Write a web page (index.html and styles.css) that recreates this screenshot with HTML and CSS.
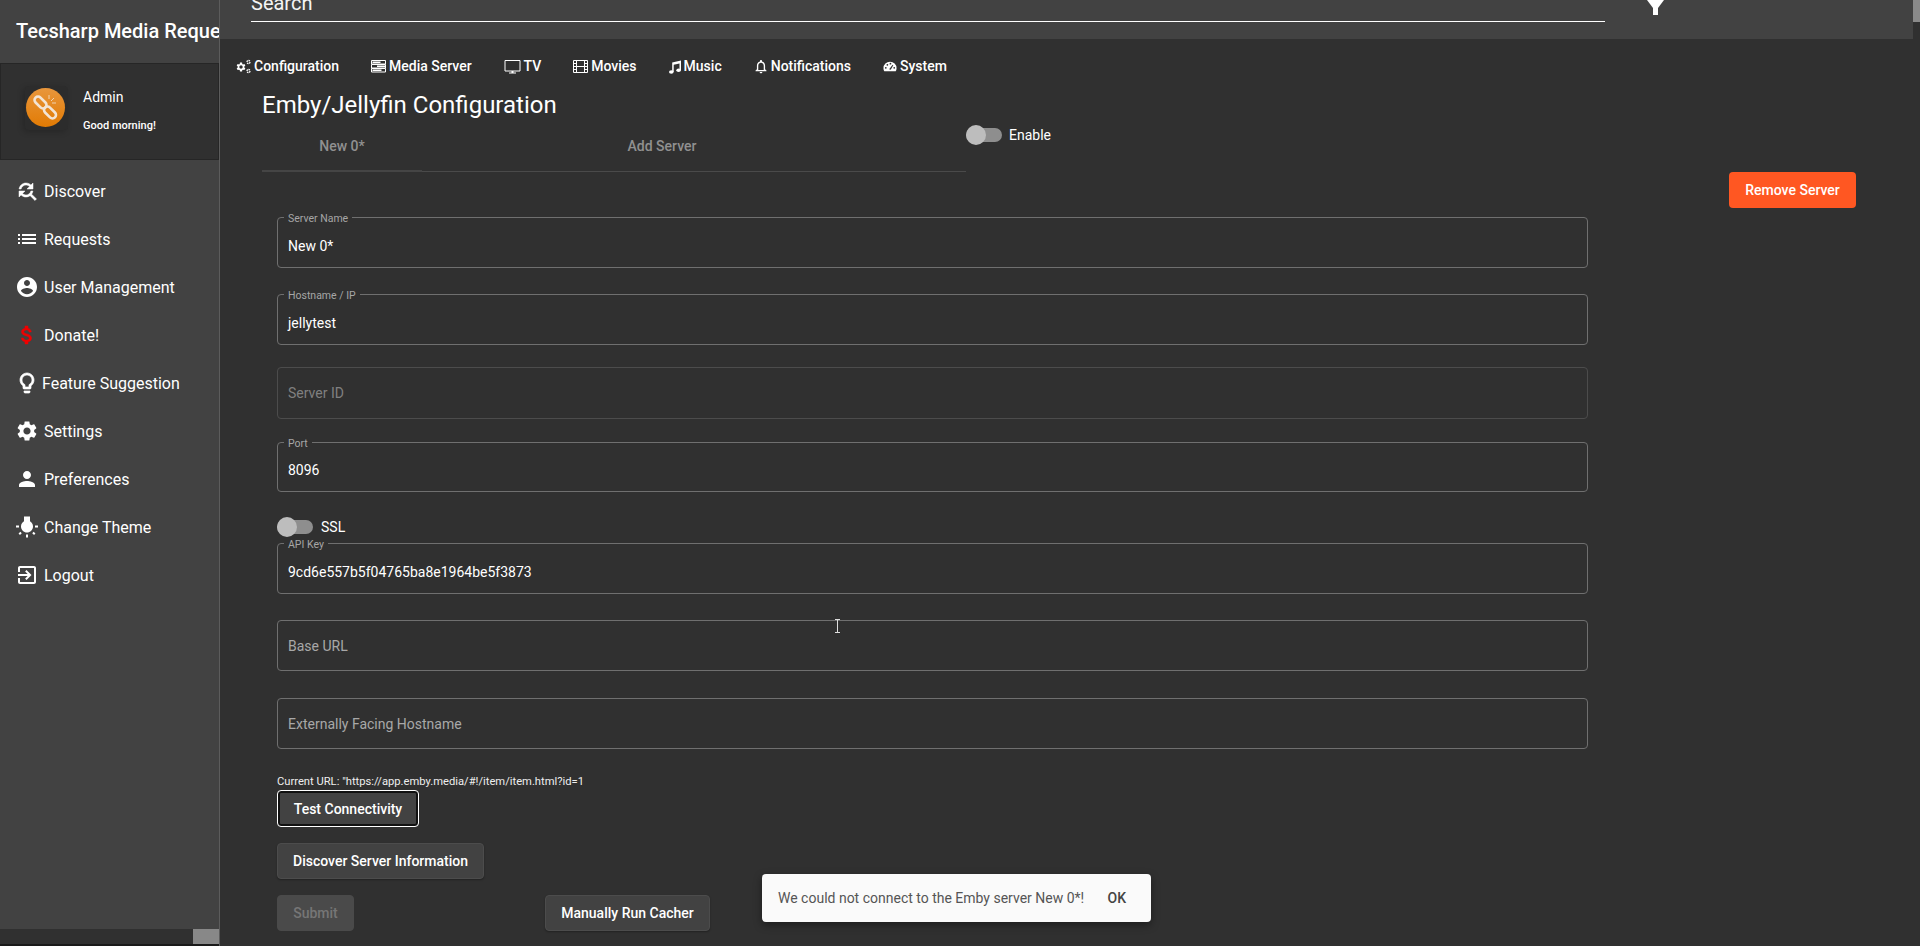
FILE: index.html
```html
<!DOCTYPE html>
<html lang="en">
<head>
  <title>Emby/Jellyfin Configuration</title>
  <link rel="stylesheet" href="styles.css">
</head>
<body>
  <div class="app">
    <div class="sidebar">
      <div class="brand">Tecsharp Media Requests</div>
      <div class="user-panel">
        <div class="avatar-box">
          <div class="avatar">
            <svg viewBox="0 0 39 39" width="39" height="39">
              <g fill="none" stroke="#f3e4d4" stroke-width="2.600">
                <rect x="11" y="7.500" width="7" height="14" rx="3.500" transform="rotate(-45 14.500 14.500)"/>
                <rect x="20.500" y="17.500" width="7" height="14" rx="3.500" transform="rotate(-45 24 24.500)"/>
              </g>
              <path d="M23 7v4M28 10l-3 3M30 15l-4 0" stroke="#f3e4d4" stroke-width=".8" fill="none"/>
            </svg>
          </div>
        </div>
        <div class="user-text">
          <div class="user-name">Admin</div>
          <div class="user-greeting">Good morning!</div>
        </div>
      </div>
      <div class="side-nav">
        <a class="side-item">
          <svg class="side-icon icon-heavy" viewBox="0 0 24 24"><path d="M11 6c1.38 0 2.63.56 3.54 1.46L12 10h6V4l-2.05 2.05C14.68 4.78 12.93 4 11 4c-3.53 0-6.43 2.61-6.92 6H6.1c.46-2.28 2.48-4 4.9-4zm5.64 9.14c.66-.9 1.12-1.97 1.28-3.14H15.9c-.46 2.28-2.48 4-4.9 4-1.38 0-2.63-.56-3.54-1.46L10 12H4v6l2.05-2.05C7.32 17.22 9.07 18 11 18c1.55 0 2.98-.51 4.14-1.36L20 21.49 21.49 20l-4.85-4.86z"/></svg>
          Discover
        </a>
        <a class="side-item">
          <svg class="side-icon" viewBox="0 0 24 24"><path d="M3 13h2v-2H3v2zm0 4h2v-2H3v2zm0-8h2V7H3v2zm4 4h14v-2H7v2zm0 4h14v-2H7v2zM7 7v2h14V7H7z"/></svg>
          Requests
        </a>
        <a class="side-item">
          <svg class="side-icon" viewBox="0 0 24 24"><path d="M12 2C6.48 2 2 6.48 2 12s4.48 10 10 10 10-4.48 10-10S17.52 2 12 2zm0 3c1.66 0 3 1.34 3 3s-1.34 3-3 3-3-1.34-3-3 1.34-3 3-3zm0 14.2c-2.5 0-4.71-1.28-6-3.22.03-1.99 4-3.08 6-3.08 1.99 0 5.97 1.09 6 3.08-1.29 1.94-3.5 3.22-6 3.22z"/></svg>
          User Management
        </a>
        <a class="side-item">
          <svg class="side-icon icon-red" viewBox="0 0 24 24"><path d="M11.8 10.9c-2.27-.59-3-1.2-3-2.15 0-1.09 1.01-1.85 2.7-1.85 1.78 0 2.44.85 2.5 2.1h2.21c-.07-1.72-1.12-3.3-3.21-3.81V3h-3v2.16c-1.94.42-3.5 1.68-3.5 3.61 0 2.31 1.91 3.46 4.7 4.13 2.5.6 3 1.48 3 2.41 0 .69-.49 1.79-2.7 1.79-2.06 0-2.87-.92-2.98-2.1h-2.2c.12 2.19 1.76 3.42 3.68 3.83V21h3v-2.15c1.95-.37 3.5-1.5 3.5-3.55 0-2.84-2.43-3.81-4.7-4.4z"/></svg>
          Donate!
        </a>
        <a class="side-item item-tight">
          <svg class="side-icon icon-bulb" viewBox="0 0 24 24"><path d="M9 21c0 .55.45 1 1 1h4c.55 0 1-.45 1-1v-1H9v1zm3-19C8.14 2 5 5.14 5 9c0 2.38 1.19 4.47 3 5.74V17c0 .55.45 1 1 1h6c.55 0 1-.45 1-1v-2.26c1.81-1.27 3-3.36 3-5.74 0-3.86-3.14-7-7-7zm2.85 11.1l-.85.6V16h-4v-2.3l-.85-.6C7.8 12.16 7 10.63 7 9c0-2.76 2.24-5 5-5s5 2.24 5 5c0 1.63-.8 3.16-2.15 4.1z"/></svg>
          Feature Suggestion
        </a>
        <a class="side-item">
          <svg class="side-icon" viewBox="0 0 24 24"><path d="M19.14 12.94c.04-.3.06-.61.06-.94 0-.32-.02-.64-.07-.94l2.03-1.58c.18-.14.23-.41.12-.61l-1.92-3.32c-.12-.22-.37-.29-.59-.22l-2.39.96c-.5-.38-1.03-.7-1.62-.94l-.36-2.54c-.04-.24-.24-.41-.48-.41h-3.84c-.24 0-.43.17-.47.41l-.36 2.54c-.59.24-1.13.57-1.62.94l-2.39-.96c-.22-.08-.47 0-.59.22L2.74 8.87c-.12.21-.08.47.12.61l2.03 1.58c-.05.3-.09.63-.09.94s.02.64.07.94l-2.03 1.58c-.18.14-.23.41-.12.61l1.92 3.32c.12.22.37.29.59.22l2.39-.96c.5.38 1.03.7 1.62.94l.36 2.54c.05.24.24.41.48.41h3.84c.24 0 .44-.17.47-.41l.36-2.54c.59-.24 1.13-.56 1.62-.94l2.39.96c.22.08.47 0 .59-.22l1.92-3.32c.12-.22.07-.47-.12-.61l-2.01-1.58zM12 15.6c-1.98 0-3.6-1.62-3.6-3.6s1.62-3.6 3.6-3.6 3.6 1.62 3.6 3.6-1.62 3.6-3.6 3.6z"/></svg>
          Settings
        </a>
        <a class="side-item">
          <svg class="side-icon" viewBox="0 0 24 24"><path d="M12 12c2.21 0 4-1.79 4-4s-1.79-4-4-4-4 1.79-4 4 1.79 4 4 4zm0 2c-2.67 0-8 1.34-8 4v2h16v-2c0-2.66-5.33-4-8-4z"/></svg>
          Preferences
        </a>
        <a class="side-item">
          <svg class="side-icon" viewBox="0 0 24 24"><path d="M3.55 18.54l1.41 1.41 1.79-1.8-1.41-1.41-1.79 1.8zM11 22.45h2V19.5h-2v2.95zM4 10.5H1v2h3v-2zm11-4.19V1.5H9v4.81C7.21 7.35 6 9.28 6 11.5c0 3.31 2.69 6 6 6s6-2.69 6-6c0-2.22-1.21-4.15-3-5.19zm5 4.19v2h3v-2h-3zm-2.76 7.66l1.79 1.8 1.41-1.41-1.8-1.79-1.4 1.4z"/></svg>
          Change Theme
        </a>
        <a class="side-item">
          <svg class="side-icon" viewBox="0 0 24 24"><path d="M10.09 15.59L11.5 17l5-5-5-5-1.41 1.41L12.67 11H3v2h9.67l-2.58 2.59zM19 3H5c-1.11 0-2 .9-2 2v4h2V5h14v14H5v-4H3v4c0 1.1.89 2 2 2h14c1.1 0 2-.9 2-2V5c0-1.1-.9-2-2-2z"/></svg>
          Logout
        </a>
      </div>
      <div class="side-scroll">
        <div class="side-scroll-thumb"></div>
        <div class="side-scroll-rest"></div>
      </div>
    </div>

    <div class="main">
      <div class="topbar">
        <div class="search">Search</div>
        <svg class="filter-icon" viewBox="0 0 17 15" width="17" height="15"><path d="M0 0h17l-6 8v7H6V8z"/></svg>
      </div>

      <div class="top-tabs">
        <a class="top-tab">
          <svg class="tab-icon" viewBox="0 0 15 15">
            <path transform="translate(-.5 2.500) scale(.46)" fill="#fff" d="M19.14 12.94c.04-.3.06-.61.06-.94 0-.32-.02-.64-.07-.94l2.03-1.58c.18-.14.23-.41.12-.61l-1.92-3.32c-.12-.22-.37-.29-.59-.22l-2.39.96c-.5-.38-1.03-.7-1.62-.94l-.36-2.54c-.04-.24-.24-.41-.48-.41h-3.84c-.24 0-.43.17-.47.41l-.36 2.54c-.59.24-1.13.57-1.62.94l-2.39-.96c-.22-.08-.47 0-.59.22L2.74 8.87c-.12.21-.08.47.12.61l2.03 1.58c-.05.3-.09.63-.09.94s.02.64.07.94l-2.03 1.58c-.18.14-.23.41-.12.61l1.92 3.32c.12.22.37.29.59.22l2.39-.96c.5.38 1.03.7 1.62.94l.36 2.54c.05.24.24.41.48.41h3.84c.24 0 .44-.17.47-.41l.36-2.54c.59-.24 1.13-.56 1.62-.94l2.39.96c.22.08.47 0 .59-.22l1.92-3.32c.12-.22.07-.47-.12-.61l-2.01-1.58zM12 15.6c-1.98 0-3.6-1.62-3.6-3.6s1.62-3.6 3.6-3.6 3.6 1.62 3.6 3.6-1.62 3.6-3.6 3.6z"/>
            <circle cx="12.500" cy="3" r="1.500" fill="none" stroke="#fff" stroke-width="1.300" stroke-dasharray="1.500 .6"/>
            <circle cx="12.500" cy="12" r="1.500" fill="none" stroke="#fff" stroke-width="1.300" stroke-dasharray="1.500 .6"/>
          </svg>
          Configuration
        </a>
        <a class="top-tab">
          <svg class="tab-icon" viewBox="0 0 15 15"><path d="M.5 1.500h14v3.500H.5zM.5 5.500h14v3.500H.5zM.5 9.500h14v3.500H.5z" fill="none" stroke="#fff"/><path d="M1.500 2.500h8v1.500h-8zM6 6.500h8V8H6zM1.500 10.500h9V12h-9z" fill="#fff"/></svg>
          Media Server
        </a>
        <a class="top-tab">
          <svg class="tab-icon icon-wide" viewBox="0 0 17 15"><path d="M1 1.500h15V12H1z" fill="none" stroke="#fff"/><path d="M5 13.500h7v1H5zM7.500 12h2v1.500h-2z" fill="#fff"/></svg>
          TV
        </a>
        <a class="top-tab">
          <svg class="tab-icon" viewBox="0 0 15 15"><path d="M.5 1.500h14v12H.5zM3.500 1.500v12M11.500 1.500v12M.5 4.500h3M.5 7.500h14M.5 10.500h3M11.500 4.500h3M11.500 10.500h3" fill="none" stroke="#fff"/></svg>
          Movies
        </a>
        <a class="top-tab">
          <svg class="tab-icon icon-narrow" viewBox="0 0 12 15"><path d="M3.200 3.500L12 1.500V11h-1.500V4.500L4.700 5.800V13H3.200z" fill="#fff"/><ellipse cx="2.300" cy="13" rx="2.300" ry="1.700" fill="#fff"/><ellipse cx="9.600" cy="11.200" rx="2.300" ry="1.700" fill="#fff"/></svg>
          Music
        </a>
        <a class="top-tab">
          <svg class="tab-icon icon-bell" viewBox="2 1 20 22"><path fill="#fff" d="M12 22c1.1 0 2-.9 2-2h-4c0 1.1.89 2 2 2zm6-6v-5c0-3.070-1.640-5.640-4.500-6.320V4c0-.83-.67-1.500-1.500-1.500s-1.500.67-1.500 1.500v.68C7.630 5.360 6 7.920 6 11v5l-2 2v1h16v-1l-2-2zm-2 1H8v-6c0-2.480 1.510-4.500 4-4.500s4 2.020 4 4.500v6z"/></svg>
          Notifications
        </a>
        <a class="top-tab">
          <svg class="tab-icon icon-bell" viewBox="0 0 16 16"><path d="M8 2.500a7.500 7.500 0 0 0-7.500 7.500c0 1.400.4 2.600 1 3.500h13c.6-.9 1-2.100 1-3.500A7.500 7.500 0 0 0 8 2.500z" fill="#fff"/><g fill="#303030"><circle cx="3.200" cy="9.500" r="1"/><circle cx="5" cy="6" r="1"/><circle cx="8.500" cy="4.800" r="1"/><circle cx="12.800" cy="9.500" r="1"/><path d="M7 11l4-5 .8.500-3 5.300z"/></g></svg>
          System
        </a>
      </div>

      <div class="page">
        <h1 class="page-title">Emby/Jellyfin Configuration</h1>

        <div class="tabs-row">
          <div class="server-tabs">
            <div class="server-tab tab-current">New 0*</div>
            <div class="server-tab">Add Server</div>
          </div>
          <div class="toggle enable-toggle">
            <span class="switch"><span class="knob"></span></span>
            <span class="toggle-label">Enable</span>
          </div>
        </div>

        <div class="remove-row">
          <button class="btn btn-warn">Remove Server</button>
        </div>

        <div class="form">
          <div class="field field-first">
            <span class="field-label">Server Name</span>
            <span class="field-value">New 0*</span>
          </div>
          <div class="field field-host">
            <span class="field-label">Hostname / IP</span>
            <span class="field-value">jellytest</span>
          </div>
          <div class="field field-id field-disabled">
            <span class="field-hint">Server ID</span>
          </div>
          <div class="field field-port">
            <span class="field-label">Port</span>
            <span class="field-value">8096</span>
          </div>
          <div class="toggle ssl-toggle">
            <span class="switch"><span class="knob"></span></span>
            <span class="toggle-label">SSL</span>
          </div>
          <div class="field field-key">
            <span class="field-label">API Key</span>
            <span class="field-value">9cd6e557b5f04765ba8e1964be5f3873</span>
          </div>
          <div class="field field-base">
            <span class="field-hint">Base URL</span>
          </div>
          <div class="field field-ext">
            <span class="field-hint">Externally Facing Hostname</span>
          </div>

          <div class="current-url">Current URL: "https://app.emby.media/#!/item/item.html?id=1</div>
          <button class="btn btn-focus">Test Connectivity</button>
          <div class="btn-row discover-row">
            <button class="btn">Discover Server Information</button>
          </div>
          <div class="btn-row submit-row">
            <button class="btn btn-off">Submit</button>
            <button class="btn">Manually Run Cacher</button>
          </div>
        </div>
      </div>
    </div>

    <div class="page-scroll"></div>
  </div>

  <!-- toast sits over the page -->
  <div class="toast">
    <span>We could not connect to the Emby server New 0*!</span>
    <span class="toast-action">OK</span>
  </div>

  <svg class="text-cursor" viewBox="0 0 7 14" width="7" height="14"><path d="M1 .5h5M1 13.500h5M3.500 .5v13" fill="none" stroke="#ddd"/></svg>
</body>
</html>
```

FILE: styles.css
```css
html, body {
  margin: 0;
  height: 100%;
  overflow: hidden;
  background-color: #303030;
  color: #fff;
  font-family: Roboto, "Noto Sans", sans-serif;
}
.app {
  display: flex;
  height: 946px;
}

/* left menu */
.sidebar {
  width: 219px;
  flex: none;
  display: flex;
  flex-direction: column;
  background-color: #424242;
  border-right: 1px solid #5c5c5c;
  overflow: hidden;
}
.brand {
  height: 63px;
  line-height: 62px;
  padding-left: 16px;
  font-size: 20px;
  font-weight: 500;
  white-space: nowrap;
}
.user-panel {
  height: 95px;
  flex: none;
  display: flex;
  background-color: #303030;
  border: 1px solid #262626;
}
.avatar-box {
  width: 43px;
  height: 44px;
  margin: 22px 0 0 24px;
  border-radius: 4px;
  background-color: #2c2c2c;
  box-shadow: -2px 2px 6px rgba(0, 0, 0, 0.2);
}
.avatar {
  width: 39px;
  height: 39px;
  margin: 2px 0 0 1px;
  border-radius: 50%;
  background: linear-gradient(#e8963c, #e27b04);
}
.user-text {
  margin-left: 15px;
}
.user-name {
  font-size: 14px;
  margin-top: 24px;
  line-height: 18px;
}
.user-greeting {
  font-size: 11px;
  font-weight: 500;
  line-height: 14px;
  margin-top: 13px;
}
.side-nav {
  flex: 1;
  padding-top: 7px;
}
.side-item {
  display: flex;
  align-items: center;
  gap: 5px;
  height: 48px;
  padding-left: 16px;
  font-size: 16px;
}
.item-tight {
  gap: 3px;
}
.side-icon {
  width: 24px;
  height: 24px;
  margin-left: -1px;
  fill: #fff;
  flex: none;
}
.icon-heavy {
  stroke: #fff;
  stroke-width: 0.5;
}
.icon-bulb {
  stroke: #fff;
  stroke-width: 0.7;
}
.icon-red {
  fill: #f00000;
  stroke: #f00000;
  stroke-width: 0.5;
}
.side-scroll {
  flex: none;
  height: 15px;
  display: flex;
}
.side-scroll-thumb {
  width: 193px;
  background-color: #303030;
}
.side-scroll-rest {
  flex: 1;
  background-color: #888;
}
.sidebar::after {
  content: "";
  height: 2px;
  background-color: #1a1a1a;
}

/* right part */
.main {
  flex: 1;
  min-width: 0;
  display: flex;
  flex-direction: column;
}
.page-scroll {
  width: 7px;
  flex: none;
  background: linear-gradient(#8a8a8a 22px, #303030 22px);
}
.topbar {
  height: 39px;
  flex: none;
  position: relative;
  background-color: #424242;
  overflow: hidden;
}
.search {
  position: absolute;
  left: 31px;
  top: -7px;
  width: 1354px;
  height: 28px;
  line-height: 20px;
  font-size: 20px;
  color: #f4f4f4;
  border-bottom: 1px solid #fff;
}
.filter-icon {
  position: absolute;
  left: 1427px;
  top: 0;
  fill: #fff;
}
.top-tabs {
  display: flex;
  height: 30px;
  align-items: center;
  padding-left: 16px;
  margin-top: 12px;
  margin-bottom: 8px;
  gap: 32px;
}
.top-tab {
  display: flex;
  align-items: center;
  gap: 3px;
  font-size: 14px;
  font-weight: 500;
  white-space: nowrap;
}
.tab-icon {
  width: 15px;
  height: 15px;
  flex: none;
}
.icon-wide {
  width: 17px;
}
.icon-narrow {
  width: 12px;
}
.icon-bell {
  width: 14px;
}
.page {
  padding-left: 42px;
}
.page-title {
  margin: 0;
  height: 36px;
  line-height: 32px;
  font-size: 24px;
  font-weight: 400;
}
.tabs-row {
  display: flex;
  align-items: flex-start;
}
.server-tabs {
  width: 704px;
  height: 48px;
  flex: none;
  display: flex;
  box-sizing: border-box;
  margin-top: -1px;
  border-bottom: 1px solid #4a4a4a;
}
.server-tab {
  width: 160px;
  height: 48px;
  line-height: 44px;
  margin-right: 160px;
  text-align: center;
  font-size: 14px;
  font-weight: 500;
  color: #909090;
}
.tab-current {
  box-shadow: inset 0 -2px 0 #454545;
}
.toggle {
  display: flex;
  align-items: center;
}
.switch {
  position: relative;
  display: block;
  width: 36px;
  height: 14px;
  border-radius: 7px;
  background-color: #8e8e8e;
}
.knob {
  position: absolute;
  left: 0;
  top: -3px;
  width: 20px;
  height: 20px;
  border-radius: 50%;
  background-color: #bdbdbd;
}
.toggle-label {
  margin-left: 8px;
  font-size: 14px;
}
.enable-toggle {
  height: 20px;
}
.enable-toggle .toggle-label {
  margin-left: 7px;
}
.remove-row {
  display: flex;
  justify-content: flex-end;
  width: 1594px;
  height: 0;
}
.btn {
  height: 36px;
  padding: 0;
  border: 1px solid #4c4c4c;
  border-radius: 4px;
  background-color: #424242;
  color: #fff;
  font-family: Roboto, "Noto Sans", sans-serif;
  font-size: 14px;
  font-weight: 500;
  box-shadow: 0 1px 2px rgba(0, 0, 0, 0.3);
  white-space: nowrap;
  flex: none;
}
.btn-warn {
  border: none;
  width: 127px;
  background-color: #ff5722;
  box-shadow: none;
}
.btn-focus {
  display: block;
  width: 142px;
  height: 37px;
  border: 1px solid #fff;
  box-shadow: inset 0 0 0 2px #111;
}
.btn-off {
  width: 77px;
  color: #767676;
  background-color: #4a4a4a;
  border-color: #4a4a4a;
  box-shadow: none;
}
.btn-row {
  display: flex;
  align-items: center;
}
.discover-row {
  margin-top: 16px;
}
.discover-row .btn {
  width: 207px;
}
.submit-row {
  margin-top: 16px;
  gap: 191px;
}
.submit-row .btn:last-child {
  width: 165px;
}

/* outlined inputs */
.form {
  width: 1311px;
  margin-left: 15px;
}
.field {
  position: relative;
  box-sizing: border-box;
  height: 51px;
  padding: 0 10px;
  display: flex;
  align-items: center;
  border: 1px solid #6f6f6f;
  border-radius: 4px;
  font-size: 14px;
}
.field-first {
  margin-top: 45px;
}
.field-host {
  margin-top: 26px;
}
.field-id {
  margin-top: 22px;
  height: 52px;
}
.field-port {
  margin-top: 23px;
  height: 50px;
}
.field-key {
  margin-top: 0;
}
.field-base {
  margin-top: 26px;
}
.field-ext {
  margin-top: 27px;
}
.field-disabled {
  border-color: #4c4c4c;
}
.field-label {
  position: absolute;
  left: 6px;
  top: -4px;
  padding: 0 4px;
  background-color: #303030;
  font-size: 10.500px;
  line-height: 10px;
  color: #a6a6a6;
}
.field-value {
  color: #fff;
  font-size: 14px;
  margin-top: 6px;
}
.field-hint {
  color: #a8a8a8;
  font-size: 14px;
}
.field-disabled .field-hint {
  color: #808080;
}
.ssl-toggle {
  height: 20px;
  margin: 25px 0 6px;
}
.current-url {
  margin-top: 26px;
  height: 15px;
  line-height: 14px;
  font-size: 11.200px;
  color: #eee;
}
.toast {
  position: absolute;
  left: 762px;
  top: 874px;
  width: 389px;
  height: 48px;
  box-sizing: border-box;
  display: flex;
  align-items: center;
  justify-content: space-between;
  padding: 0 25px 0 16px;
  border-radius: 4px;
  background-color: #fafafa;
  color: #555;
  font-size: 14px;
  box-shadow: 0 3px 8px rgba(0, 0, 0, 0.4);
}
.toast-action {
  color: #444;
  font-weight: 500;
}
.text-cursor {
  position: absolute;
  left: 834px;
  top: 619px;
}
```
